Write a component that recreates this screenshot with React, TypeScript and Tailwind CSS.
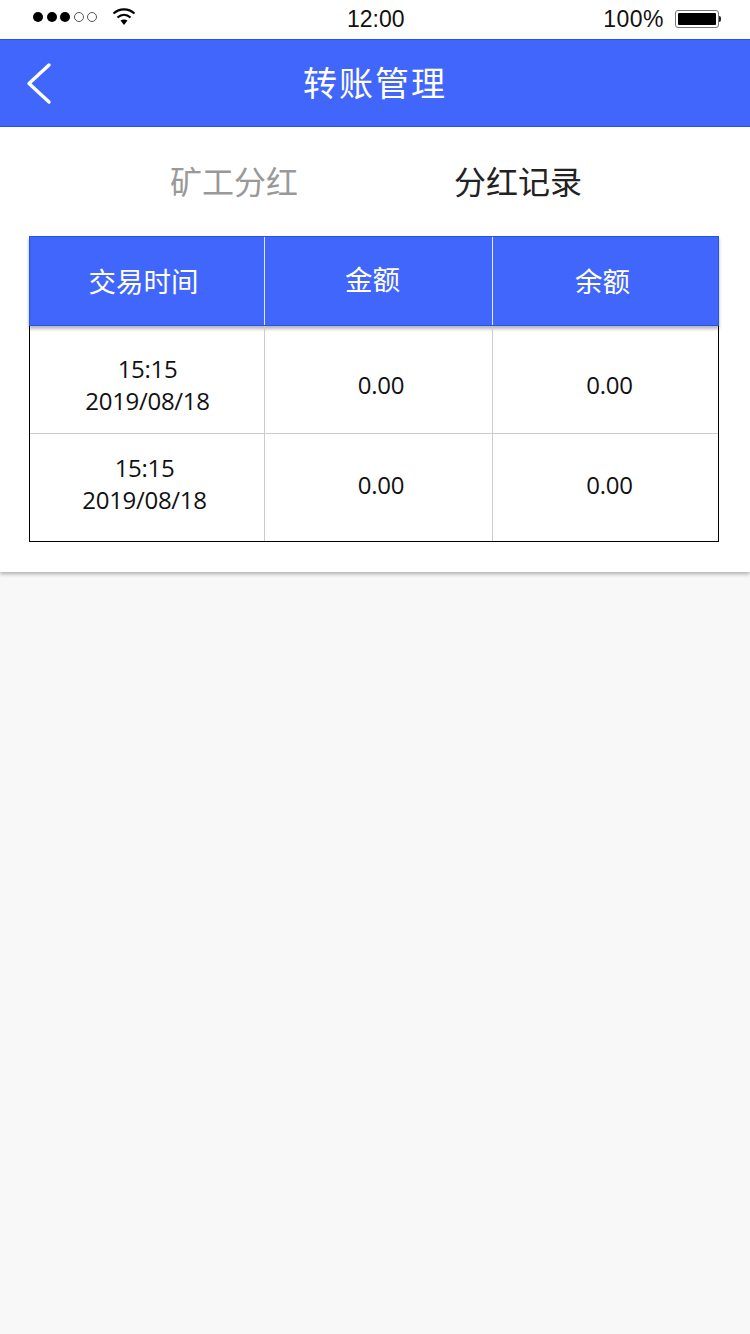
const CJK = 'font-["Noto_Sans_CJK_SC","Noto_Sans",sans-serif]';

const rows = [
  { time: '15:15', date: '2019/08/18', amount: '0.00', balance: '0.00', timeClass: 'h-[108px] border-b border-[#ccc]', dateClass: 'pt-[10px] pl-[1px]', valueClass: 'pt-[10px]' },
  { time: '15:15', date: '2019/08/18', amount: '0.00', balance: '0.00', timeClass: 'h-[107px]', dateClass: 'pb-[8px] pr-[5px]', valueClass: 'pb-[6px]' },
];

const StatusBar = () => (
  <div className="relative flex h-[39px] items-center justify-between bg-white pl-[33px] pr-[29px] font-['Liberation_Sans',sans-serif] text-[23px] text-[#111]">
    <div className="flex items-center">
      <div className="flex items-center gap-[3.5px] pb-[5px]">
        <span className="h-[10px] w-[10px] rounded-full bg-black" />
        <span className="h-[10px] w-[10px] rounded-full bg-black" />
        <span className="h-[10px] w-[10px] rounded-full bg-black" />
        <span className="h-[10px] w-[10px] rounded-full border border-[#555]" />
        <span className="h-[10px] w-[10px] rounded-full border border-[#555]" />
      </div>
      <svg className="mb-[6px] ml-[15px]" width="24" height="19" viewBox="0 0 24 19" fill="none">
        <path d="M1.5 6.5C7.5 1 16.5 1 22.5 6.5" stroke="#000" strokeWidth="2.2" />
        <path d="M5.5 10.5C9.5 7 14.5 7 18.5 10.5" stroke="#000" strokeWidth="2.2" />
        <path d="M8.5 13.5C10.5 12 13.5 12 15.5 13.5L12 18Z" fill="#000" />
      </svg>
    </div>
    <span className="absolute left-[347px] top-[6px] leading-[26px]">12:00</span>
    <div className="flex items-center gap-[11px] pb-[2px]">
      <span className="leading-[26px] tracking-[0.5px]">100%</span>
      <div className="flex items-center">
        <div className="h-[18px] w-[44px] rounded-[3px] border border-[#777] p-[2px]">
          <div className="h-full w-full rounded-[1px] bg-black" />
        </div>
        <div className="h-[6px] w-[2px] rounded-r-full bg-[#222]" />
      </div>
    </div>
  </div>
);

const App = () => {
  return (
    <div className={`min-h-[1334px] bg-[#f8f8f8] ${CJK}`}>
      <div className="h-[572px] bg-white shadow-[0_2px_4px_rgba(0,0,0,0.3)]">
        <StatusBar />
        <header className="relative flex h-[88px] items-center justify-center border-y border-[#2352ee] bg-[#4066fb]">
          <svg className="absolute left-[26px] top-[22px]" width="26" height="44" viewBox="0 0 26 44" fill="none">
            <path d="M23 3L3 21.5L23 40" stroke="#fff" strokeWidth="3.4" strokeLinecap="round" strokeLinejoin="round" />
          </svg>
          <h1 className="pb-[2px] text-[34px] font-normal leading-none tracking-[2px] text-white">转账管理</h1>
        </header>

        <div className="flex h-[109px] items-center pb-[3px] text-[32px] leading-none">
          <span className="ml-[170px] text-[#999]">矿工分红</span>
          <span className="ml-[156px] text-[#222]">分红记录</span>
        </div>

        <div className="ml-[29px] h-[306px] w-[690px] border border-black">
          <div className="-mx-[1px] -mt-[1px] grid h-[90px] grid-cols-[235px_228px_1fr] border border-[#2352ee] bg-[#4066fb] text-[27.5px] leading-none text-white shadow-[0_3px_3px_rgba(0,0,0,0.28)]">
            <div className="flex items-center justify-center border-r border-[#e4e8f8] pr-[7px]">交易时间</div>
            <div className="flex items-center justify-center border-r border-[#e4e8f8] pb-[4px] pr-[12px]">金额</div>
            <div className="flex items-center justify-center pr-[6px]">余额</div>
          </div>
          {rows.map((row, i) => (
            <div
              key={i}
              className={`grid grid-cols-[235px_228px_1fr] font-['Open_Sans','Noto_Sans',sans-serif] text-[24px] tracking-[-0.3px] text-[#111] ${row.timeClass}`}
            >
              <div className={`flex flex-col items-center justify-center border-r border-[#ccc] leading-[32px] ${row.dateClass}`}>
                <span>{row.time}</span>
                <span>{row.date}</span>
              </div>
              <div className={`flex items-center justify-center border-r border-[#ccc] pl-[5px] ${row.valueClass}`}>{row.amount}</div>
              <div className={`flex items-center justify-center pl-[8px] ${row.valueClass}`}>{row.balance}</div>
            </div>
          ))}
        </div>
      </div>
    </div>
  );
};

export default App;
